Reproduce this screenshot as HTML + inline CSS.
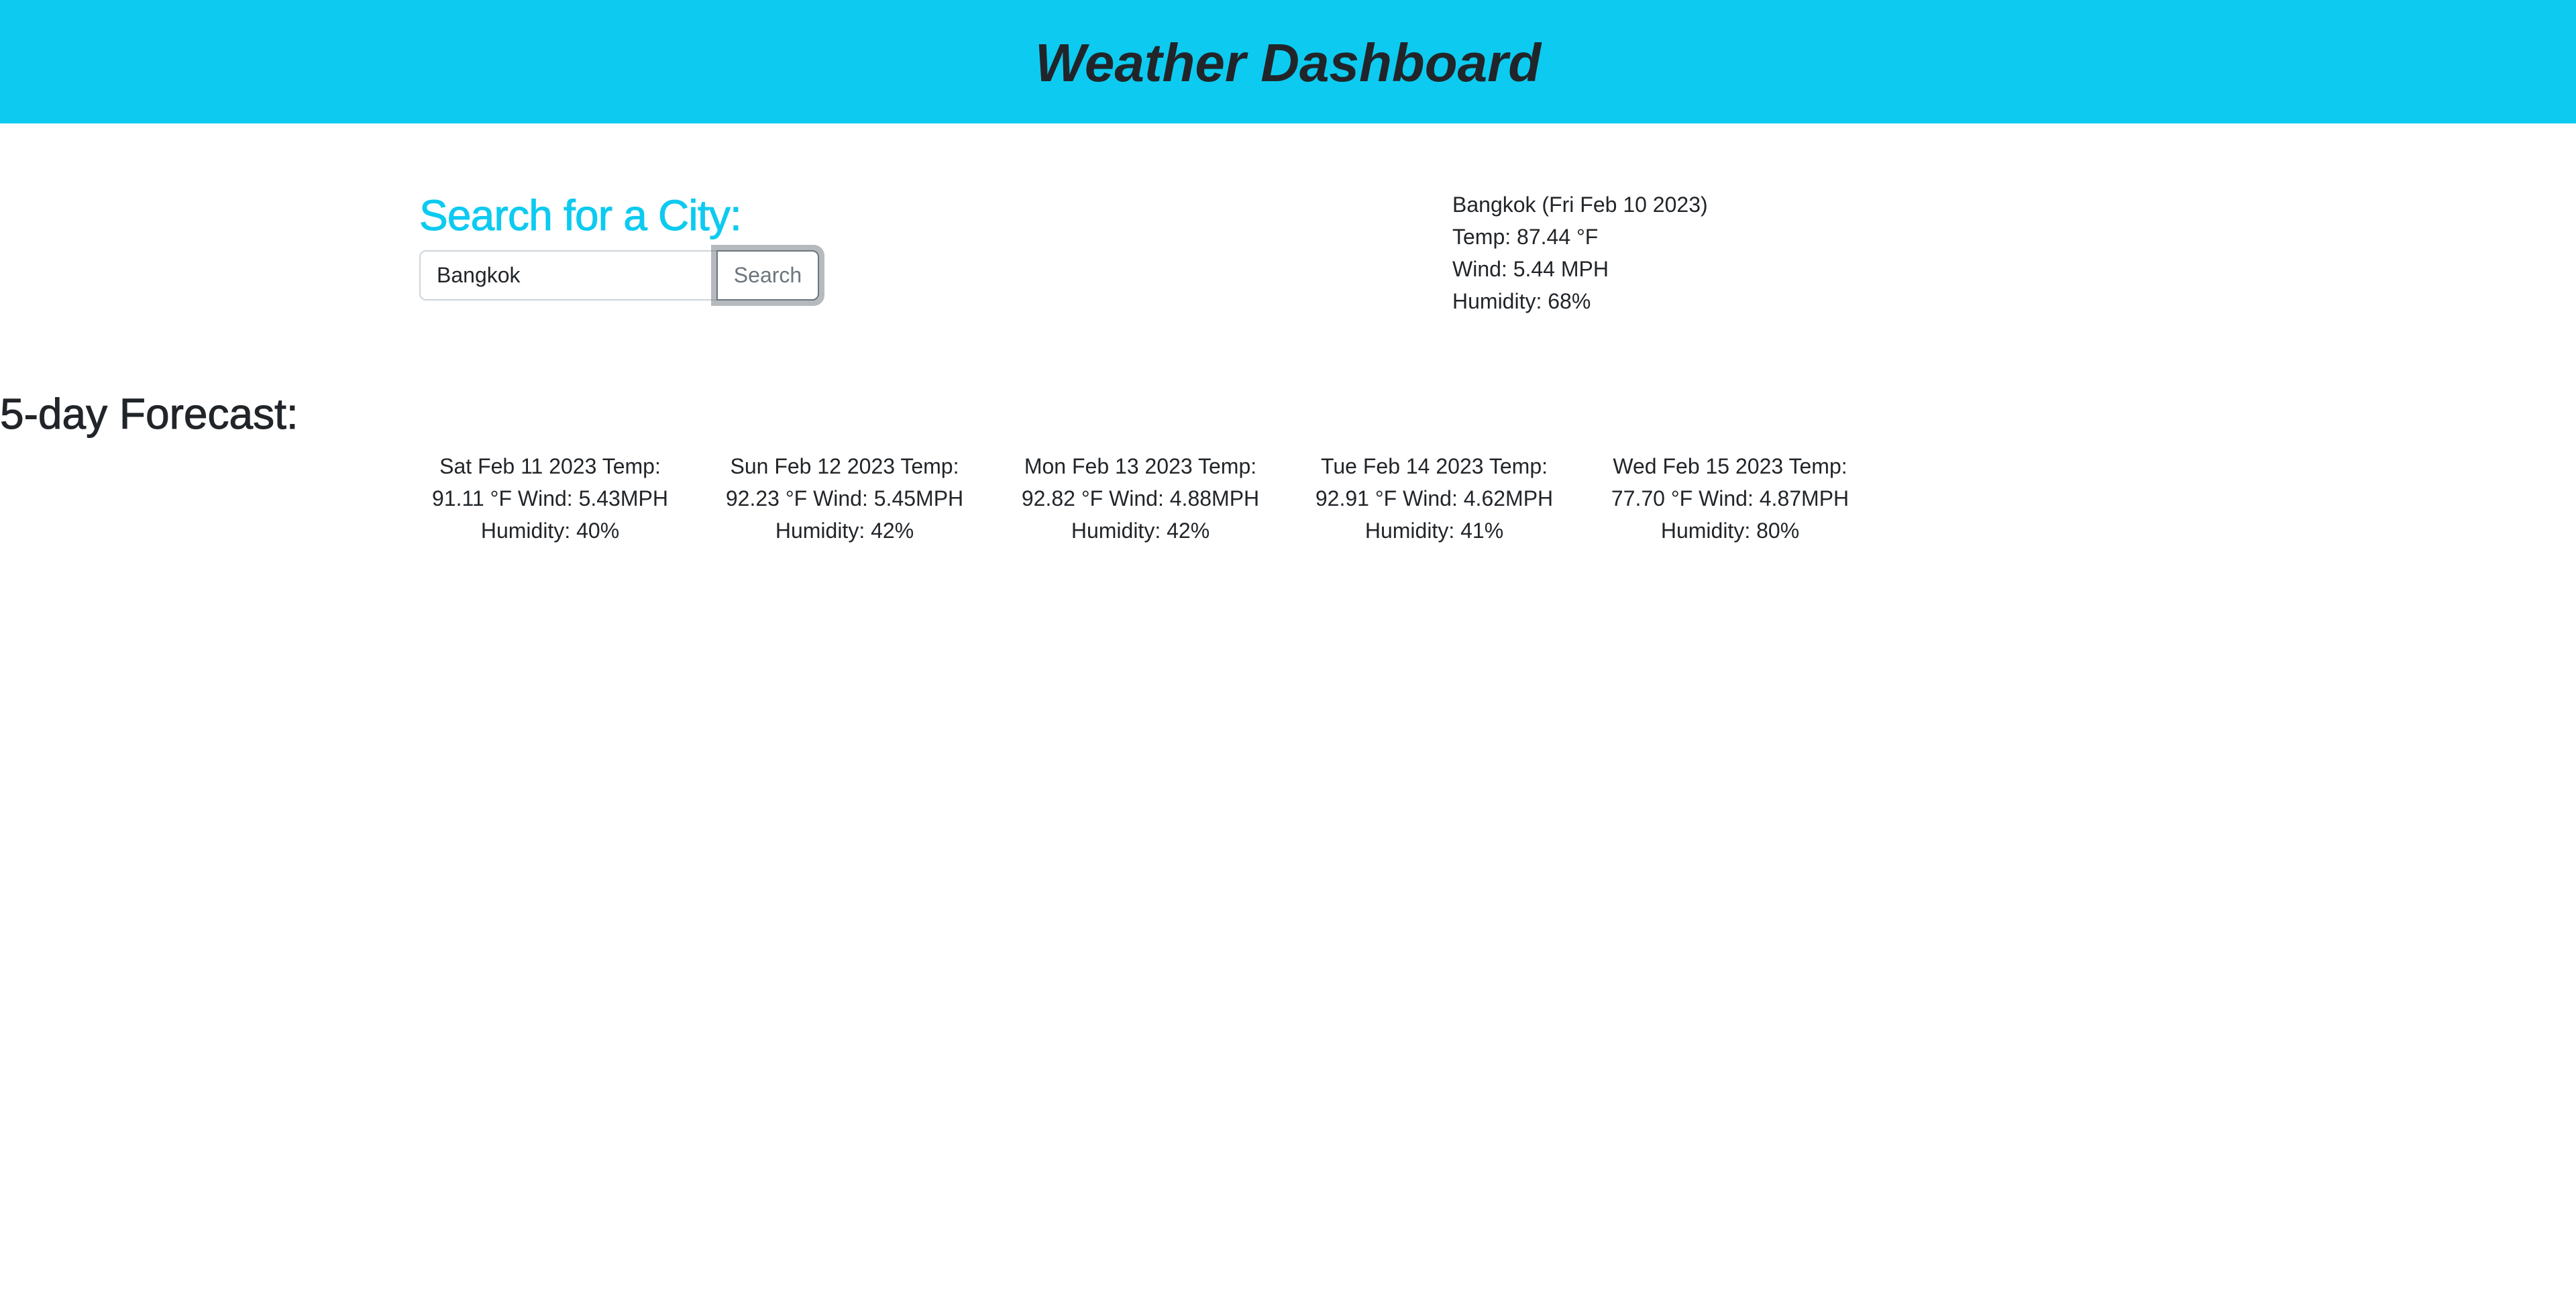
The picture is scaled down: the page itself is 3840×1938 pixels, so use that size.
<!DOCTYPE html>
<html><head><meta charset="utf-8"><style>
html,body{margin:0;padding:0;width:3840px;height:1938px;background:#fff;overflow:hidden;font-family:"Liberation Sans",sans-serif;color:#212529}
.abs{position:absolute;white-space:nowrap}
header{position:absolute;left:0;top:0;width:3840px;height:184px;background:#0dcaf0}
.h1{left:0;width:3840px;text-align:center;top:54px;font-size:80px;line-height:80px;font-weight:bold;font-style:italic}
.h2{font-size:64px;line-height:64px;-webkit-text-stroke:1px currentColor}
.p{font-size:32px;line-height:48px}
.input{position:absolute;left:625px;top:373px;width:443px;height:75px;box-sizing:border-box;border:2px solid #ced4da;border-right:none;border-radius:10px 0 0 10px;font-size:32px;line-height:71px;padding-left:24px;color:#212529}
.ring{position:absolute;left:1060px;top:365px;width:169px;height:91px;box-sizing:border-box;background:rgba(108,117,125,.5);border-radius:0 16px 16px 0}
.btn{position:absolute;left:1068px;top:373px;width:153px;height:75px;box-sizing:border-box;border:2px solid #6c757d;border-radius:0 10px 10px 0;background:#fff;color:#6c757d;font-size:32px;line-height:71px;text-align:center}
.card{position:absolute;top:671px;width:440px;margin-left:-220px;text-align:center;font-size:32px;line-height:48px;white-space:nowrap}
</style></head><body>
<header><div class="abs h1">Weather Dashboard</div></header>
<div class="abs h2" style="left:625px;top:289px;color:#0dcaf0;letter-spacing:-0.8px">Search for a City:</div>
<div class="input">Bangkok</div>
<div class="ring"></div>
<div class="btn">Search</div>
<div class="abs p" style="left:2165px;top:281px">Bangkok (Fri Feb 10 2023)<br>Temp: 87.44 °F<br>Wind: 5.44 MPH<br>Humidity: 68%</div>
<div class="abs h2" style="left:0;top:585px">5-day Forecast:</div>
<div class="card" style="left:820px">Sat Feb 11 2023 Temp:<br>91.11 °F Wind: 5.43MPH<br>Humidity: 40%</div>
<div class="card" style="left:1259px">Sun Feb 12 2023 Temp:<br>92.23 °F Wind: 5.45MPH<br>Humidity: 42%</div>
<div class="card" style="left:1700px">Mon Feb 13 2023 Temp:<br>92.82 °F Wind: 4.88MPH<br>Humidity: 42%</div>
<div class="card" style="left:2138px">Tue Feb 14 2023 Temp:<br>92.91 °F Wind: 4.62MPH<br>Humidity: 41%</div>
<div class="card" style="left:2579px">Wed Feb 15 2023 Temp:<br>77.70 °F Wind: 4.87MPH<br>Humidity: 80%</div>
</body></html>
